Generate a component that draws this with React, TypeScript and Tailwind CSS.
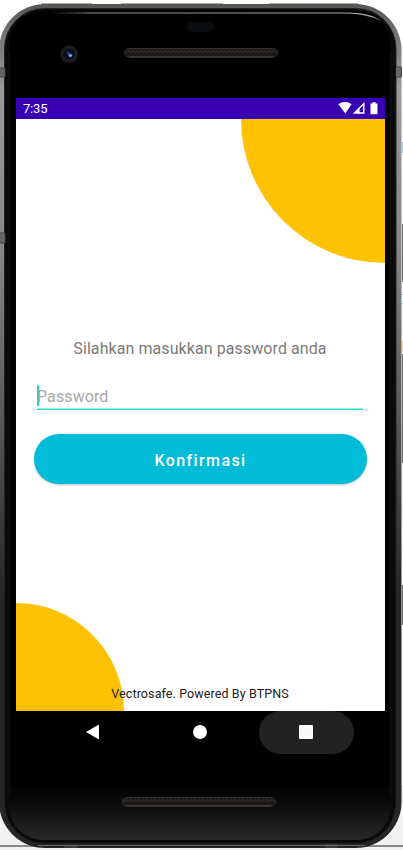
import React from "react";

function Speaker({ id }: { id: string }) {
  return (
    <svg className="block" width="154" height="10" viewBox="0 0 154 10">
      <defs>
        <pattern id={id} width="4" height="6" patternUnits="userSpaceOnUse">
          <rect width="4" height="6" fill="#191714" />
          <path d="M0.5 1.5h1.5v3h-1.5zM2.5 2.5h1v3h-1z" fill="#302a25" />
        </pattern>
      </defs>
      <rect x="0.5" y="0.5" width="153" height="8.5" rx="4.25" fill={`url(#${id})`} stroke="#33312f" />
      <path d="M5 9h144" stroke="#4b4842" />
    </svg>
  );
}

function Camera() {
  return (
    <svg className="block" width="18" height="18" viewBox="0 0 18 18">
      <circle cx="9" cy="9" r="8.8" fill="#1d1b1c" />
      <circle cx="9" cy="9" r="5.5" fill="#090c1c" />
      <path d="M6 6l3 1 1 3-2 1-1-3z" fill="#25377c" />
      <circle cx="10.3" cy="10.3" r="1.9" fill="#4f70c8" />
      <circle cx="10.5" cy="10.7" r="0.9" fill="#b4caff" />
    </svg>
  );
}

function StatusBar() {
  return (
    <div className="flex h-[21px] items-center bg-[#3700b3] pl-[7px] text-white">
      <span className="mt-px text-[13px] leading-[18px] tracking-[-0.2px]">7:35</span>
      <svg className="ml-auto block" width="47" height="21" viewBox="338 98 47 21" fill="#fff">
        <path d="M338.4 104.2Q341 102.1 345 102.1T351.6 104.2L345.3 113.5z" />
        <path fillRule="evenodd" d="M364.5 102v11.7h-11.7zM358.8 109.6v2.6h4.2v-6.8z" />
        <path d="M358 108.4h1.6v5h-1.6z" />
        <path d="M372.5 102.2h3v1.2h2v10.2a.7.7 0 0 1-.7.7h-5.6a.7.7 0 0 1-.7-.7v-10.2h2z" />
      </svg>
    </div>
  );
}

export default function App() {
  return (
    <div className="relative h-[850px] w-[403px] overflow-hidden bg-white font-[Roboto,sans-serif]">
      <svg className="absolute inset-0" width="403" height="850" viewBox="0 0 403 850">
        <defs>
          <linearGradient id="rim" x1="0" y1="0" x2="0" y2="1">
            <stop offset="0" stopColor="#555652" />
            <stop offset=".04" stopColor="#777" />
            <stop offset=".1" stopColor="#9a9a9a" />
            <stop offset=".3" stopColor="#858585" />
            <stop offset=".5" stopColor="#555" />
            <stop offset=".7" stopColor="#262626" />
            <stop offset="1" stopColor="#262626" />
          </linearGradient>
          <linearGradient id="glass" x1="0" y1="0" x2="0" y2="1">
            <stop offset="0" stopColor="#000" />
            <stop offset=".93" stopColor="#000" />
            <stop offset=".965" stopColor="#101010" />
            <stop offset="1" stopColor="#292929" />
          </linearGradient>
          <linearGradient id="shine">
            <stop offset="0" stopColor="#7d8989" stopOpacity="0" />
            <stop offset=".12" stopColor="#849090" />
            <stop offset=".95" stopColor="#a4adaa" />
            <stop offset="1" stopColor="#a4adaa" />
          </linearGradient>
        </defs>
        <path d="M401 785h2v65H0v-34h20z" fill="#f1f1f1" />
        <path d="M0 846h403" stroke="#888" strokeWidth="2" />
        <path d="M402.5 224v58M402.5 354v109M402.5 585v40" stroke="#737373" />
        <path d="M402.5 142v11M402.5 294v1M402.5 303v1" stroke="#91cbe3" />
        <path d="M402.5 341v11" stroke="#ead99a" />
        <rect x="-1" y="4" width="402.5" height="844" rx="46" fill="url(#rim)" />
        <path d="M41 3.5H92M121 3.5H223M269 3.5H358" stroke="#aaa" />
        <rect x="4.5" y="8.5" width="391.5" height="835" rx="40" fill="#0a0a0a" stroke="#222" />
        <rect x="9" y="11" width="382" height="829" rx="34" fill="url(#glass)" />
        <path d="M9.5 50V795M390.5 50V795" stroke="#111" />
        <path d="M50 12.5H346Q371 12.5 381 21Q370 14.5 346 13.5H50z" fill="url(#shine)" />
        <path d="M0 68h5v9H0M396 67h5.5v10h-5.5M0 233h5v10H0" fill="#666" stroke="#454545" />
        <path d="M307 4h12v3.5h-12z" fill="#555" />
        <path d="M64 845h13v3H64zM325 844h12v4h-12z" fill="#383838" />
        <path d="M38 845.5H365" stroke="#656565" />
      </svg>

      <main className="relative flex h-full flex-col pl-[16px] pr-[18px]">
        <header className="h-[98px] pt-[22px]">
          <div className="ml-[171px] h-[10px] w-[27px] rounded-full bg-[#090b0e]" />
          <div className="mt-[13px] flex items-start">
            <div className="ml-[44px]"><Camera /></div>
            <div className="ml-[46px] mt-[3px]"><Speaker id="earpiece" /></div>
          </div>
        </header>

        <section className="relative h-[613px] overflow-hidden bg-white">
          <StatusBar />
          <div className="absolute right-0 top-[21px] h-[143.5px] w-[144px] rounded-bl-full bg-[#ffc103]" />
          <div className="absolute bottom-0 left-0 h-[108px] w-[107.5px] rounded-tr-full bg-[#ffc103]" />
          <div className="relative flex h-[592px] flex-col items-center pt-[220px]">
            <p className="-ml-px text-[16px] leading-[20px] tracking-[0.08px] text-[#7a7a7a]">Silahkan masukkan password anda</p>
            <div className="ml-[21px] mt-[26px] flex h-[23px] w-[326px] items-start self-start">
              <span className="h-[21px] w-[2px] bg-[#24dcc4]" />
              <span className="-ml-[2px] mt-[2px] text-[16px] leading-[20px] tracking-[0.1px] text-[#a8a8a8]">Password</span>
            </div>
            <div className="ml-[21px] h-[2px] w-[326px] self-start border-t border-[#a5efe5] bg-[#24dcc4]" />
            <button className="ml-[18px] mt-[24px] h-[50px] w-[333px] self-start rounded-full bg-[#00bcd8] pt-[4px] text-[16px] font-medium tracking-[1.4px] text-white shadow-[0_1px_2px_rgba(0,0,0,0.25)]">Konfirmasi</button>
            <footer className="-ml-px mb-[9px] mt-auto text-[12.5px] leading-[16px] tracking-[0.1px] text-[#202020]">Vectrosafe. Powered By BTPNS</footer>
          </div>
        </section>

        <nav className="flex h-[43px] items-center bg-black">
          <svg className="-mt-[2px] ml-[69px] block" width="16" height="18" viewBox="0 0 16 18"><path d="M1 9L13 2Q14 1.5 14 2.5V15.5Q14 16.5 13 16z" fill="#fff" /></svg>
          <span className="-mt-px ml-[92px] h-[14px] w-[14px] rounded-full bg-white" />
          <span className="ml-[52px] flex h-[43px] w-[95px] items-center justify-center rounded-full bg-[#222]">
            <span className="-ml-px -mt-px h-[14px] w-[14px] rounded-[1px] bg-[#fafafa]" />
          </span>
        </nav>
        <div className="ml-[105.5px] mt-[43px]"><Speaker id="bottom-speaker" /></div>
      </main>
    </div>
  );
}
